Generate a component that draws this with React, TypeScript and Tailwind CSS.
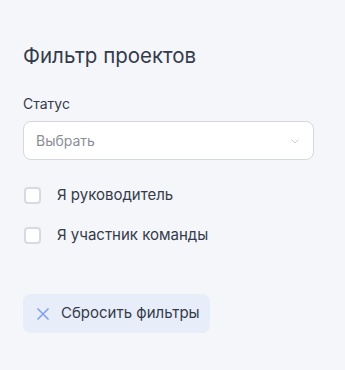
import React from "react";

export default function App() {
  return (
    <div className="min-h-[370px] w-[345px] bg-[#f5f6fa] px-[23px] pt-[42px] font-['Inter',sans-serif] text-[#343b4b]">
      <h2 className="text-[20.5px] leading-[28px]">Фильтр проектов</h2>

      <div className="mt-[24px] text-[14px] leading-[20px]">Статус</div>
      <button className="mt-[7px] flex h-[39px] w-[291px] items-center justify-between rounded-[8px] border border-[#d5d8de] bg-white pl-[12px] pr-[12px] text-[14px] text-[#8b8f98]">
        <span>Выбрать</span>
        <svg width="12" height="12" viewBox="0 0 12 12" fill="none">
          <path d="M2.5 4.5L6 8l3.5-3.5" stroke="#c9ccd3" strokeWidth="1" />
        </svg>
      </button>

      <div className="mt-[26px] flex flex-col gap-[22px] pl-[1px]">
        <label className="flex items-center gap-[16px] text-[15px] leading-[18px]">
          <span className="h-[17px] w-[17px] rounded-[4px] border-2 border-[#d7dae0] bg-white" />
          Я руководитель
        </label>
        <label className="flex items-center gap-[16px] text-[15px] leading-[18px]">
          <span className="h-[17px] w-[17px] rounded-[4px] border-2 border-[#d7dae0] bg-white" />
          Я участник команды
        </label>
      </div>

      <button className="mt-[50px] flex h-[39px] items-center gap-[11px] rounded-[8px] bg-[#e8eef9] pl-[13px] pr-[10px] text-[15px]">
        <svg width="14" height="14" viewBox="0 0 14 14" fill="none">
          <path d="M1.5 1.5l11 11M12.5 1.5l-11 11" stroke="#7d9ef2" strokeWidth="1.5" />
        </svg>
        Сбросить фильтры
      </button>
    </div>
  );
}
